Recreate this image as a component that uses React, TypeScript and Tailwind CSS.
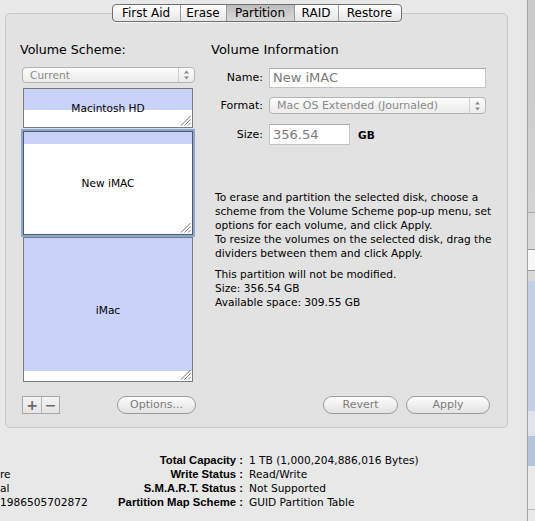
import React from "react";

// ─── small drawings ─────────────────────────────────────────────

function UpDownArrows() {
  return (
    <svg width="7" height="10" viewBox="0 0 7 10" fill="none">
      <path d="M3.5 0.5L6 3.5H1z" fill="#8a8a8a" />
      <path d="M3.5 9.5L6 6.5H1z" fill="#8a8a8a" />
    </svg>
  );
}

function ResizeGrip() {
  return (
    <svg width="11" height="11" viewBox="0 0 11 11" fill="none">
      <line x1="10.5" y1="1" x2="1" y2="10.5" stroke="#6a6a6a" strokeWidth="0.9" />
      <line x1="10.5" y1="4.5" x2="4.5" y2="10.5" stroke="#6a6a6a" strokeWidth="0.9" />
      <line x1="10.5" y1="8" x2="8" y2="10.5" stroke="#6a6a6a" strokeWidth="0.9" />
    </svg>
  );
}

// ─── controls ───────────────────────────────────────────────────

const tabs = [
  { label: "First Aid", w: "w-[67px]" },
  { label: "Erase", w: "w-[46px]" },
  { label: "Partition", w: "w-[68px]", active: true },
  { label: "RAID", w: "w-[44px]" },
  { label: "Restore", w: "w-[63px]" },
];

function TabBar() {
  return (
    <div className="-mt-[10px] flex justify-center">
      <div className="flex h-[18px] overflow-hidden rounded-[4px] border border-[#707070] bg-gradient-to-b from-[#ffffff] to-[#e6e6e6] shadow-[0_1px_0_rgba(255,255,255,0.6)]">
        {tabs.map((t, i) => (
          <div
            key={t.label}
            className={
              "flex items-center justify-center text-[12px] leading-none " +
              t.w +
              (i > 0 ? " border-l border-[#9a9a9a]" : "") +
              (t.active ? " bg-gradient-to-b from-[#bdbdbd] to-[#d9d9d9]" : "")
            }
          >
            {t.label}
          </div>
        ))}
      </div>
    </div>
  );
}

function Popup({ label, className }: { label: string; className: string }) {
  return (
    <div
      className={
        "flex items-center rounded-[4px] border border-[#b4b4b4] bg-gradient-to-b from-[#fbfbfb] to-[#ececec] " +
        className
      }
    >
      <span className="flex-1 truncate pl-[7px] text-[#8a8a8a]">{label}</span>
      <span className="flex h-full w-[16px] items-center justify-center border-l border-[#d0d0d0]">
        <UpDownArrows />
      </span>
    </div>
  );
}

function PillButton({ label, className }: { label: string; className: string }) {
  return (
    <div
      className={
        "flex h-[18px] items-center justify-center rounded-full border border-[#9c9c9c] bg-gradient-to-b from-[#fdfdfd] to-[#e2e2e2] text-[11px] text-[#7c7c7c] " +
        className
      }
    >
      {label}
    </div>
  );
}

// ─── partition map ──────────────────────────────────────────────

function Volume({
  name,
  used,
  height,
  selected,
}: {
  name: string;
  used: string;
  height: string;
  selected?: boolean;
}) {
  return (
    <div
      className={
        "relative ml-[1px] grid w-[170px] border bg-white " +
        height +
        (selected
          ? " border-[#5a5a5a] shadow-[0_0_0_2px_#86a8d8]"
          : " border-[#7a7a7a]")
      }
    >
      <div className="col-start-1 row-start-1 flex flex-col">
        <div className={"bg-[#c9d3f9] " + used} />
      </div>
      <div className="col-start-1 row-start-1 flex items-center justify-center">
        {name}
      </div>
      <div className="absolute bottom-[1px] right-[1px]">
        <ResizeGrip />
      </div>
    </div>
  );
}

// ─── main ───────────────────────────────────────────────────────

export default function App() {
  return (
    <div className="flex h-[521px] w-[535px] overflow-hidden bg-[#e8e8e8] font-['Lucida_Grande','DejaVu_Sans',sans-serif] text-[10.6px] leading-[14px] text-black">
      <main className="flex w-[527px] flex-col">
        {/* Group box */}
        <section className="ml-[5px] mt-[13px] flex h-[415px] w-[503px] flex-col rounded-[5px] border border-[#c8c8c8] bg-[#e2e2e2]">
          <TabBar />

          <div className="flex flex-1 gap-[15px] pb-[13px] pl-[14px] pt-[20px]">
            {/* Volume Scheme */}
            <div className="flex w-[176px] flex-col">
              <h2 className="h-[16px] text-[12.6px] leading-[16px]">Volume Scheme:</h2>
              <Popup label="Current" className="ml-[2px] mt-[9px] h-[16px] w-[173px]" />

              <div className="ml-[2px] mt-[5px] flex flex-col">
                <Volume name="Macintosh HD" used="h-[21px]" height="h-[40px]" />
                <div className="mt-[3px]">
                  <Volume name="New iMAC" used="h-[12px]" height="h-[104px]" selected />
                </div>
                <div className="mt-[2px]">
                  <Volume name="iMac" used="h-[133px]" height="h-[145px]" />
                </div>
              </div>

              <div className="mt-auto flex items-center">
                <div className="ml-[2px] flex h-[18px] border border-[#a8a8a8] bg-gradient-to-b from-[#f4f4f4] to-[#e4e4e4] text-[#6a6a6a]">
                  <span className="flex w-[18px] items-center justify-center text-[14px] font-bold leading-none">+</span>
                  <span className="flex w-[18px] items-center justify-center border-l border-[#b4b4b4] text-[14px] font-bold leading-none">−</span>
                </div>
                <PillButton label="Options..." className="ml-auto w-[79px]" />
              </div>
            </div>

            {/* Volume Information */}
            <div className="flex w-[280px] flex-col">
              <h2 className="h-[16px] text-[13px] leading-[16px]">Volume Information</h2>

              <div className="mt-[10px] flex items-center">
                <span className="w-[52px] text-right text-[11px]">Name:</span>
                <div className="ml-[6px] flex h-[20px] w-[217px] items-center border border-[#c4c4c4] border-t-[#a8a8a8] bg-white pl-[3px] text-[13px] text-[#7a7a7a]">
                  New iMAC
                </div>
              </div>

              <div className="mt-[9px] flex items-center">
                <span className="w-[52px] text-right text-[11px]">Format:</span>
                <Popup label="Mac OS Extended (Journaled)" className="ml-[6px] h-[17px] w-[217px] text-[11px]" />
              </div>

              <div className="mt-[10px] flex items-center">
                <span className="w-[52px] text-right text-[11px]">Size:</span>
                <div className="ml-[6px] flex h-[21px] w-[81px] items-center border border-[#c4c4c4] border-t-[#a8a8a8] bg-white pl-[3px] text-[13px] text-[#7a7a7a]">
                  356.54
                </div>
                <span className="ml-[8px] font-semibold">GB</span>
              </div>

              <div className="ml-[4px] mt-[45px] whitespace-nowrap">
                <p>
                  To erase and partition the selected disk, choose a<br />
                  scheme from the Volume Scheme pop-up menu, set<br />
                  options for each volume, and click Apply.<br />
                  To resize the volumes on the selected disk, drag the<br />
                  dividers between them and click Apply.
                </p>
                <p className="mt-[7px]">
                  This partition will not be modified.<br />
                  Size: 356.54 GB<br />
                  Available space: 309.55 GB
                </p>
              </div>

              <div className="mt-auto flex justify-end gap-[8px] pr-[1px]">
                <PillButton label="Revert" className="w-[75px]" />
                <PillButton label="Apply" className="w-[84px]" />
              </div>
            </div>
          </div>
        </section>

        {/* Disk info */}
        <div className="mt-[25px] flex whitespace-nowrap">
          <div className="w-[90px]">
            <div>&nbsp;</div>
            <div>re</div>
            <div>al</div>
            <div>1986505702872</div>
          </div>
          <div className="w-[153px] text-right font-['Liberation_Sans',sans-serif] text-[11.3px] font-bold">
            <div>Total Capacity :</div>
            <div>Write Status :</div>
            <div>S.M.A.R.T. Status :</div>
            <div>Partition Map Scheme :</div>
          </div>
          <div className="pl-[6px]">
            <div>1 TB (1,000,204,886,016 Bytes)</div>
            <div>Read/Write</div>
            <div>Not Supported</div>
            <div>GUID Partition Table</div>
          </div>
        </div>
      </main>

      {/* edge of the neighbouring pane */}
      <aside className="flex w-[8px] flex-col border-l border-[#a2a2a2]">
        <div className="h-[212px] bg-gradient-to-b from-[#c9c9c9] to-[#d3d3d3]" />
        <div className="h-[1px] bg-[#a8a8a8]" />
        <div className="h-[36px] bg-[#d9d9d9]" />
        <div className="h-[22px] border-y border-[#9a9a9a] bg-[#f6f6f6]" />
        <div className="h-[10px] bg-[#d9d9d9]" />
        <div className="h-[130px] bg-[#c4d0e3]" />
        <div className="h-[25px] bg-[#e1e5eb]" />
        <div className="h-[30px] bg-[#b4c4da]" />
        <div className="h-[43px] bg-[#ebebeb]" />
        <div className="h-[1px] bg-[#bdbdbd]" />
        <div className="flex-1 bg-[#e8e8e8]" />
      </aside>
    </div>
  );
}
